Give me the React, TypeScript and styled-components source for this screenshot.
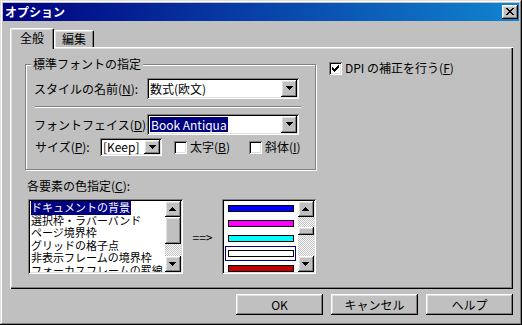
import React from 'react';
import styled, { createGlobalStyle, css } from 'styled-components';

const GlobalStyle = createGlobalStyle`
  html, body {
    margin: 0;
    padding: 0;
  }
  body {
    font-family: "Noto Sans CJK JP", "Noto Sans", sans-serif;
    font-size: 12px;
    color: #000;
    background: #c0c0c0;
  }
`;

const raised = css`
  box-shadow: inset -1px -1px #000, inset 1px 1px #fff, inset -2px -2px #808080,
    inset 2px 2px #dfdfdf;
`;

const sunken = css`
  box-shadow: inset 1px 1px #808080, inset -1px -1px #fff, inset 2px 2px #000,
    inset -2px -2px #dfdfdf;
`;

const Window = styled.div`
  width: 522px;
  height: 325px;
  box-sizing: border-box;
  padding: 3px;
  background: #c0c0c0;
  display: flex;
  flex-direction: column;
  box-shadow: inset -1px -1px #000, inset 1px 1px #dfdfdf, inset -2px -2px #808080,
    inset 2px 2px #fff;
`;

const TitleBar = styled.div`
  height: 18px;
  flex-shrink: 0;
  display: flex;
  align-items: center;
  justify-content: space-between;
  padding: 0 1px 0 2px;
  background: linear-gradient(90deg, #000080 0%, #1084d0 100%);
  color: #fff;
  font-weight: bold;
  line-height: 18px;
`;

const CloseButton = styled.div`
  width: 16px;
  height: 14px;
  box-sizing: border-box;
  background: #c0c0c0;
  ${raised};
  display: flex;
  align-items: center;
  justify-content: center;
  padding: 0 1px 1px 0;
`;

const Body = styled.div`
  flex: 1;
  display: flex;
  flex-direction: column;
  padding: 7px 6px 7px 7px;
`;

const TabRow = styled.div`
  height: 19px;
  display: flex;
  align-items: flex-end;
  position: relative;
  z-index: 1;
`;

const Tab = styled.div<{ $active?: boolean }>`
  box-sizing: border-box;
  height: ${(p) => (p.$active ? 21 : 17)}px;
  margin-bottom: ${(p) => (p.$active ? -2 : 0)}px;
  padding: ${(p) => (p.$active ? '2px 9px 0' : '1px 7px 0')};
  background: #c0c0c0;
  border-top: 1px solid #fff;
  border-left: 1px solid #fff;
  border-right: 1px solid #000;
  border-radius: 2px 2px 0 0;
  box-shadow: inset -1px 0 #808080, inset 1px 1px #dfdfdf;
  line-height: 14px;
`;

const Panel = styled.div`
  height: 242px;
  box-sizing: border-box;
  padding: 10px 0 0 15px;
  display: flex;
  align-items: flex-start;
  box-shadow: inset 1px 1px #fff, inset -1px -1px #000, inset -2px -2px #808080,
    inset 2px 2px #dfdfdf;
`;

const LeftColumn = styled.div`
  width: 291px;
  display: flex;
  flex-direction: column;
`;

const RightColumn = styled.div`
  margin: 4px 0 0 13px;
`;

const GroupBox = styled.fieldset`
  margin: 0;
  padding: 7px 8px 13px 8px;
  box-sizing: border-box;
  width: 291px;
  border: 1px solid #808080;
  box-shadow: 1px 1px #fff, inset 1px 1px #fff;
`;

const Legend = styled.legend`
  padding: 0 2px;
  margin-left: -3px;
  line-height: 14px;
  background: #c0c0c0;
`;

const FieldRow = styled.div`
  display: grid;
  grid-template-columns: 113px 152px;
  align-items: center;
`;

const Label = styled.span`
  line-height: 14px;
  white-space: nowrap;
`;

const Combo = styled.div<{ $width: number; $height: number }>`
  width: ${(p) => p.$width}px;
  height: ${(p) => p.$height}px;
  box-sizing: border-box;
  padding: 2px;
  background: #fff;
  ${sunken};
  display: flex;
  align-items: stretch;
`;

const ComboText = styled.div`
  flex: 1;
  display: flex;
  align-items: center;
  padding-left: 1px;
  line-height: 14px;
  white-space: nowrap;
`;

const Selected = styled.span`
  background: #000080;
  color: #fff;
  padding: 0 1px;
  line-height: 15px;
`;

const DropButton = styled.div`
  width: 16px;
  box-sizing: border-box;
  background: #c0c0c0;
  ${raised};
  display: flex;
  align-items: center;
  justify-content: center;
  padding-bottom: 1px;
`;

const Separator = styled.div`
  height: 0;
  border-top: 1px solid #808080;
  border-bottom: 1px solid #fff;
  margin: 7px 6px 6px 1px;
`;

const SizeRow = styled.div`
  display: flex;
  align-items: center;
  margin-top: 3px;
`;

const SizeLabel = styled(Label)`
  width: 65px;
  margin-left: 1px;
`;

const CheckLabel = styled.label<{ $gap?: number }>`
  display: flex;
  align-items: center;
  gap: 3px;
  margin-left: ${(p) => p.$gap ?? 0}px;
  line-height: 14px;
  white-space: nowrap;
`;

const CheckBox = styled.span`
  width: 13px;
  height: 13px;
  box-sizing: border-box;
  background: #fff;
  ${sunken};
  display: flex;
  align-items: center;
  justify-content: center;
`;

const SectionLabel = styled(Label)`
  margin: 9px 0 0 2px;
`;

const ListRow = styled.div`
  display: flex;
  align-items: center;
  margin: 6px 0 0 3px;
`;

const ListBox = styled.div<{ $width: number }>`
  width: ${(p) => p.$width}px;
  height: 75px;
  box-sizing: border-box;
  padding: 2px;
  background: #fff;
  ${sunken};
  display: flex;
`;

const ListItems = styled.div`
  flex: 1;
  overflow: hidden;
  padding-left: 1px;
`;

const ListItem = styled.div`
  font-size: 11px;
  line-height: 12.5px;
  height: 12.5px;
  white-space: nowrap;
`;

const ListSelected = styled.span`
  background: #000080;
  color: #fff;
  padding-right: 1px;
`;

const Arrow = styled.span`
  margin: 0 10px 0 10px;
  line-height: 14px;
`;

const ColorItems = styled.div`
  flex: 1;
  overflow: hidden;
  padding-left: 1px;
`;

const ColorRow = styled.div<{ $focused?: boolean }>`
  width: 71px;
  height: 15px;
  box-sizing: border-box;
  border: 1px solid ${(p) => (p.$focused ? '#000080' : 'transparent')};
  padding: 0 1px 0 2px;
  display: flex;
  align-items: center;
`;

const ColorBar = styled.div<{ $color: string }>`
  width: 66px;
  height: 7px;
  box-sizing: border-box;
  border: 1px solid #000;
  background: ${(p) => p.$color};
`;

const ScrollBar = styled.div`
  width: 16px;
  display: flex;
  flex-direction: column;
`;

const ScrollButton = styled.div`
  height: 16px;
  box-sizing: border-box;
  background: #c0c0c0;
  ${raised};
  display: flex;
  align-items: center;
  justify-content: center;
  padding: 0 1px 1px 0;
`;

const Track = styled.div<{ $height?: number }>`
  ${(p) => (p.$height !== undefined ? `height: ${p.$height}px;` : 'flex: 1;')}
  background: repeating-conic-gradient(#c0c0c0 0 25%, #fff 0 50%) 0 0 / 2px 2px;
`;

const Thumb = styled.div<{ $height: number }>`
  height: ${(p) => p.$height}px;
  box-sizing: border-box;
  background: #c0c0c0;
  ${raised};
`;

const ButtonRow = styled.div`
  display: flex;
  justify-content: flex-end;
  gap: 8px;
  margin-top: 5px;
`;

const PushButton = styled.div`
  width: 87px;
  height: 21px;
  box-sizing: border-box;
  background: #c0c0c0;
  ${raised};
  display: flex;
  align-items: center;
  justify-content: center;
  line-height: 14px;
`;

const PixelSvg = styled.svg`
  display: block;
`;

const Pixels: React.FC<{ rows: string[] }> = ({ rows }) => (
  <PixelSvg width={rows[0].length} height={rows.length} shapeRendering="crispEdges">
    {rows.flatMap((row, y) =>
      row
        .split('')
        .map((c, x) =>
          c === 'x' ? <rect key={`${x}-${y}`} x={x} y={y} width={1} height={1} fill="#000" /> : null,
        ),
    )}
  </PixelSvg>
);

const DOWN = ['xxxxxxx', '.xxxxx.', '..xxx..', '...x...'];
const UP = [...DOWN].reverse();
const CLOSE = ['xx....xx', '.xx..xx.', '..xxxx..', '...xx...', '..xxxx..', '.xx..xx.', 'xx....xx'];
const CHECK = ['......x', '.....xx', 'x...xxx', 'xx.xxx.', 'xxxxx..', '.xxx...', '..x....'];

const ELEMENTS = [
  'ドキュメントの背景',
  '選択枠・ラバーバンド',
  'ページ境界枠',
  'グリッドの格子点',
  '非表示フレームの境界枠',
  'フォーカスフレームの罫線',
];

const COLORS = ['#0000ff', '#ff00ff', '#00ffff', '#ffffff', '#c00000'];

const Scroll: React.FC<{ before: number; thumb: number }> = ({ before, thumb }) => (
  <ScrollBar>
    <ScrollButton>
      <Pixels rows={UP} />
    </ScrollButton>
    {before > 0 && <Track $height={before} />}
    <Thumb $height={thumb} />
    <Track />
    <ScrollButton>
      <Pixels rows={DOWN} />
    </ScrollButton>
  </ScrollBar>
);

export default function App() {
  return (
    <>
      <GlobalStyle />
      <Window>
        <TitleBar>
          <span>オプション</span>
          <CloseButton>
            <Pixels rows={CLOSE} />
          </CloseButton>
        </TitleBar>
        <Body>
          <TabRow>
            <Tab $active>全般</Tab>
            <Tab>編集</Tab>
          </TabRow>
          <Panel>
            <LeftColumn>
              <GroupBox>
                <Legend>標準フォントの指定</Legend>
                <FieldRow>
                  <Label>
                    スタイルの名前(<u>N</u>):
                  </Label>
                  <Combo $width={152} $height={21}>
                    <ComboText>数式(欧文)</ComboText>
                    <DropButton>
                      <Pixels rows={DOWN} />
                    </DropButton>
                  </Combo>
                </FieldRow>
                <Separator />
                <FieldRow>
                  <Label>
                    フォントフェイス(<u>D</u>):
                  </Label>
                  <Combo $width={152} $height={21}>
                    <ComboText>
                      <Selected>Book Antiqua</Selected>
                    </ComboText>
                    <DropButton>
                      <Pixels rows={DOWN} />
                    </DropButton>
                  </Combo>
                </FieldRow>
                <SizeRow>
                  <SizeLabel>
                    サイズ(<u>P</u>):
                  </SizeLabel>
                  <Combo $width={62} $height={18}>
                    <ComboText>[Keep]</ComboText>
                    <DropButton>
                      <Pixels rows={DOWN} />
                    </DropButton>
                  </Combo>
                  <CheckLabel $gap={12}>
                    <CheckBox />
                    <Label>
                      太字(<u>B</u>)
                    </Label>
                  </CheckLabel>
                  <CheckLabel $gap={19}>
                    <CheckBox />
                    <Label>
                      斜体(<u>I</u>)
                    </Label>
                  </CheckLabel>
                </SizeRow>
              </GroupBox>
              <SectionLabel>
                各要素の色指定(<u>C</u>):
              </SectionLabel>
              <ListRow>
                <ListBox $width={157}>
                  <ListItems>
                    {ELEMENTS.map((name, i) => (
                      <ListItem key={name}>
                        {i === 0 ? <ListSelected>{name}</ListSelected> : name}
                      </ListItem>
                    ))}
                  </ListItems>
                  <Scroll before={0} thumb={27} />
                </ListBox>
                <Arrow>==&gt;</Arrow>
                <ListBox $width={95}>
                  <ColorItems>
                    {COLORS.map((c, i) => (
                      <ColorRow key={c} $focused={i === 3}>
                        <ColorBar $color={c} />
                      </ColorRow>
                    ))}
                  </ColorItems>
                  <Scroll before={10} thumb={8} />
                </ListBox>
              </ListRow>
            </LeftColumn>
            <RightColumn>
              <CheckLabel>
                <CheckBox>
                  <Pixels rows={CHECK} />
                </CheckBox>
                <Label>
                  DPI の補正を行う(<u>F</u>)
                </Label>
              </CheckLabel>
            </RightColumn>
          </Panel>
          <ButtonRow>
            <PushButton>OK</PushButton>
            <PushButton>キャンセル</PushButton>
            <PushButton>ヘルプ</PushButton>
          </ButtonRow>
        </Body>
      </Window>
    </>
  );
}
